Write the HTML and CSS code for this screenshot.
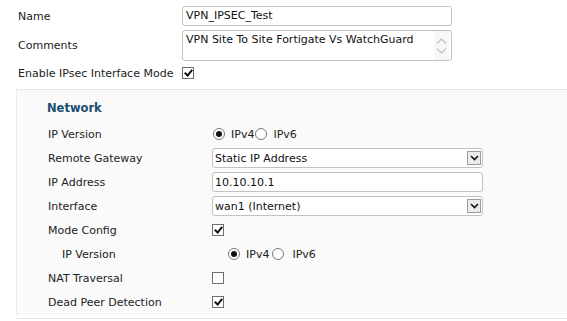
FILE: index.html
```html
<!DOCTYPE html>
<html>
<head>
<meta charset="utf-8">
<link rel="stylesheet" href="styles.css">
</head>
<body>
<div class="page">
  <div class="top">
    <div class="row r-name">
      <div class="label">Name</div>
      <div class="field input">VPN_IPSEC_Test</div>
    </div>
    <div class="row r-comments">
      <div class="label">Comments</div>
      <div class="field textarea">
        <span class="ta-text">VPN Site To Site Fortigate Vs WatchGuard</span>
        <span class="ta-scroll">
          <svg width="11" height="8" viewBox="0 0 11 8"><path d="M1 6.5 L5.5 2 L10 6.5" fill="none" stroke="#c4c4c4" stroke-width="1.3"/></svg>
          <svg width="11" height="8" viewBox="0 0 11 8"><path d="M1 1.5 L5.5 6 L10 1.5" fill="none" stroke="#c4c4c4" stroke-width="1.3"/></svg>
        </span>
      </div>
    </div>
    <div class="row r-enable">
      <div class="label">Enable IPsec Interface Mode</div>
      <span class="cb checked"></span>
    </div>
  </div>

  <div class="panel">
    <div class="prow"><div class="title">Network</div></div>
    <div class="prow">
      <div class="plabel">IP Version</div>
      <div class="radios">
        <span class="radio on"></span><span class="rtext">IPv4</span>
        <span class="radio"></span><span class="rtext">IPv6</span>
      </div>
    </div>
    <div class="prow">
      <div class="plabel">Remote Gateway</div>
      <div class="field select"><span>Static IP Address</span><span class="arrow"><svg width="9" height="6" viewBox="0 0 9 6"><path d="M1 1 L4.5 4.5 L8 1" fill="none" stroke="#111" stroke-width="1.6"/></svg></span></div>
    </div>
    <div class="prow">
      <div class="plabel">IP Address</div>
      <div class="field pinput">10.10.10.1</div>
    </div>
    <div class="prow">
      <div class="plabel">Interface</div>
      <div class="field select"><span>wan1 (Internet)</span><span class="arrow"><svg width="9" height="6" viewBox="0 0 9 6"><path d="M1 1 L4.5 4.5 L8 1" fill="none" stroke="#111" stroke-width="1.6"/></svg></span></div>
    </div>
    <div class="prow">
      <div class="plabel">Mode Config</div>
      <span class="cb checked"></span>
    </div>
    <div class="prow">
      <div class="plabel sub">IP Version</div>
      <div class="radios sub2">
        <span class="radio on"></span><span class="rtext">IPv4</span>
        <span class="radio wide"></span><span class="rtext">IPv6</span>
      </div>
    </div>
    <div class="prow">
      <div class="plabel">NAT Traversal</div>
      <span class="cb"></span>
    </div>
    <div class="prow">
      <div class="plabel">Dead Peer Detection</div>
      <span class="cb checked"></span>
    </div>
  </div>
  <div class="bottom-line"></div>
</div>
</body>
</html>
```

FILE: styles.css
```css
html, body {
  margin: 0;
  padding: 0;
  background: #ffffff;
}
body {
  font-family: "DejaVu Sans", Verdana, sans-serif;
  font-size: 11px;
  color: #222;
  width: 567px;
  height: 321px;
  overflow: hidden;
}
.page {
  padding-top: 6px;
}
.top {
  padding-left: 18px;
}
.row {
  display: flex;
  align-items: center;
}
.label {
  width: 164px;
  flex: none;
}
.r-name { height: 20px; }
.r-comments { height: 31px; margin-top: 4px; }
.r-enable { height: 16px; margin-top: 4px; }

.field {
  box-sizing: border-box;
  border: 1px solid #c2c2c2;
  border-radius: 3px;
  background: #fff;
  color: #111;
}
.input {
  width: 270px;
  height: 20px;
  line-height: 18px;
  padding-left: 3px;
}
.textarea {
  width: 270px;
  height: 31px;
  display: flex;
  justify-content: space-between;
  padding-left: 3px;
}
.ta-text {
  padding-top: 2px;
  line-height: 13px;
}
.ta-scroll {
  width: 15px;
  background: #f7f7f7;
  display: flex;
  flex-direction: column;
  align-items: center;
  justify-content: center;
  gap: 2px;
  margin-right: 2px;
}
.ta-scroll svg { display: block; }

.cb {
  box-sizing: border-box;
  width: 12px;
  height: 12px;
  border: 1px solid #6e6e6e;
  background: #fff;
  display: inline-block;
  position: relative;
  flex: none;
}
.cb.checked::after {
  content: "";
  position: absolute;
  left: 3px;
  top: 0px;
  width: 3px;
  height: 6px;
  border-right: 2px solid #111;
  border-bottom: 2px solid #111;
  transform: rotate(40deg);
}

.panel {
  margin-top: 8px;
  margin-left: 16px;
  border-top: 1px solid #e6e6e6;
  border-left: 1px solid #ececec;
  background: #fafafa;
  padding: 6px 0 1px 31px;
  height: 218px;
}
.prow {
  display: flex;
  align-items: center;
  height: 24px;
}
.prow:nth-child(2) { margin-top: 2px; }
.title {
  font-weight: bold;
  font-size: 11.5px;
  color: #1b4d72;
  margin-left: -1px;
}
.plabel {
  width: 164px;
  flex: none;
}
.plabel.sub { padding-left: 14px; box-sizing: border-box; }
.radios {
  display: flex;
  align-items: center;
}
.radios.sub2 { margin-left: 15px; }
.radio {
  box-sizing: border-box;
  width: 12px;
  height: 12px;
  border-radius: 50%;
  border: 1px solid #7a7a7a;
  background: #fff;
  display: inline-block;
  position: relative;
  margin-right: 6px;
  margin-left: 1px;
}
.radio.on::after {
  content: "";
  position: absolute;
  left: 2px;
  top: 2px;
  width: 6px;
  height: 6px;
  border-radius: 50%;
  background: #111;
}
.radio.wide { margin-left: 3px; margin-right: 8px; }
.rtext { color: #222; }

.select, .pinput {
  width: 271px;
  height: 20px;
  display: flex;
  align-items: center;
  justify-content: space-between;
  padding-left: 2px;
}
.arrow {
  box-sizing: border-box;
  width: 14px;
  height: 14px;
  border: 1px solid #9a9a9a;
  background: #ececec;
  display: flex;
  align-items: center;
  justify-content: center;
  margin-right: 1px;
}
.arrow svg { display: block; }
.bottom-line {
  margin-top: 3px;
  margin-left: 16px;
  border-top: 1px solid #e6e6e6;
}
```
